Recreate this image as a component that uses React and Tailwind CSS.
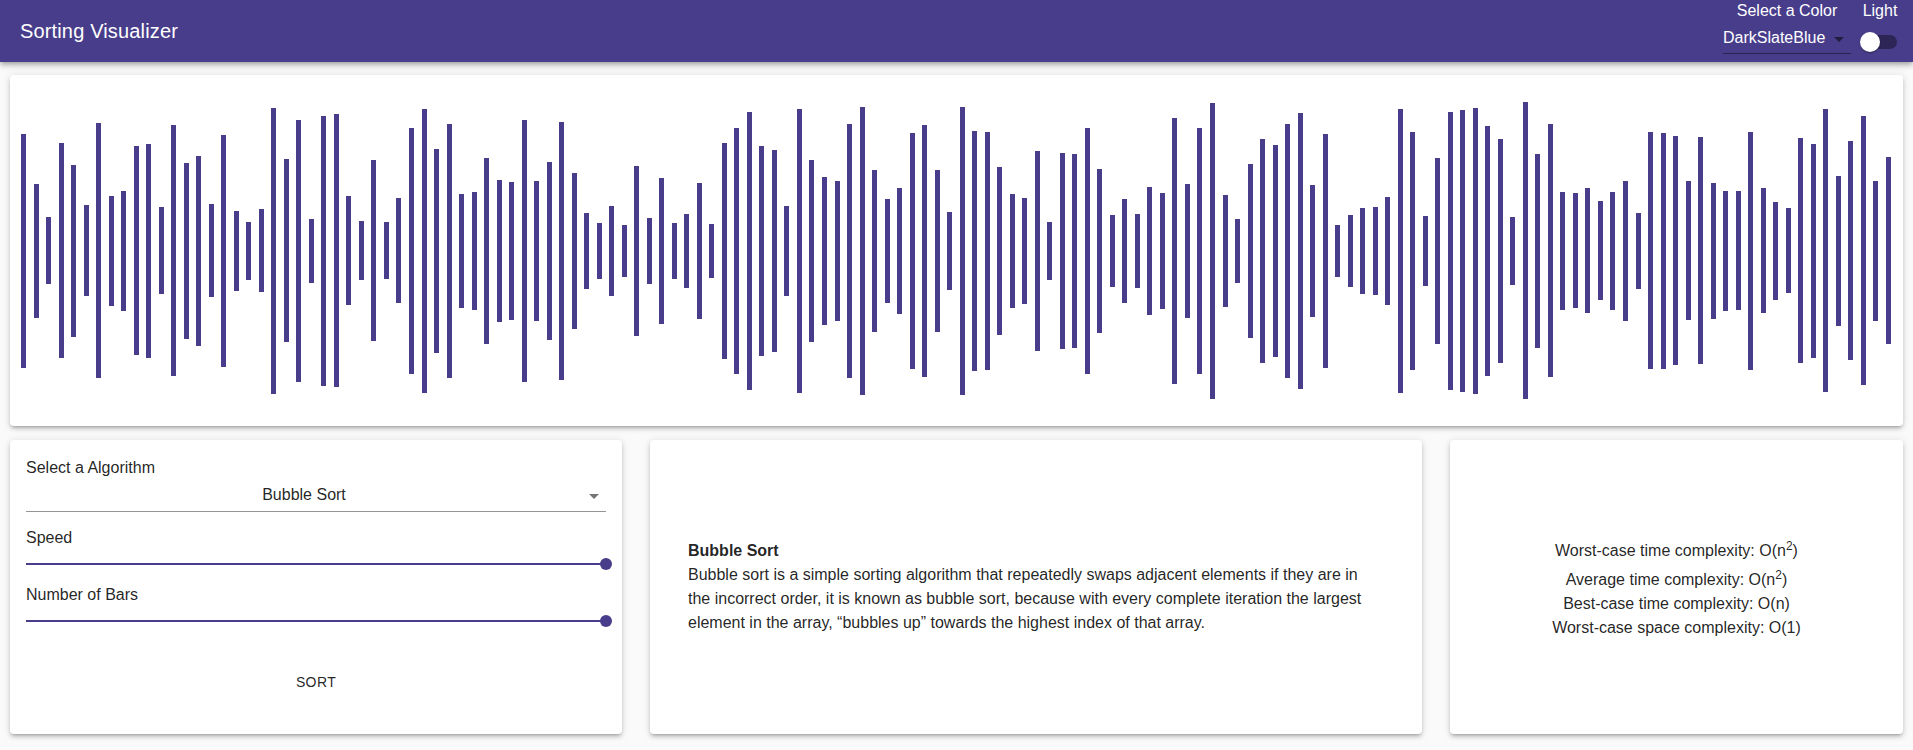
const H = [
  234,134,67,215,172,91,255,110,120,209,214,87,251,176,190,93,232,80,58,83,286,183,262,64,270,273,109,59,181,57,105,
  246,284,204,254,114,118,186,142,138,262,140,178,258,156,76,56,90,52,170,66,146,56,74,136,54,216,246,278,210,
  202,90,284,182,148,140,254,288,162,104,126,236,252,162,78,288,240,238,168,114,106,200,58,196,194,246,164,72,104,
  74,
  128,116,266,134,246,296,112,64,174,224,212,254,276,132,234,52,72,86,88,108,284,238,70,186,278,282,286,250,224,
  68,297,194,253,118,115,125,99,118,140,76,237,236,229,139,227,136,120,119,238,125,98,85,225,214,283,150,219,269,140,187,
];

const cardShadow =
  "shadow-[0_3px_3px_-2px_rgba(0,0,0,0.2),0_3px_4px_0_rgba(0,0,0,0.14),0_1px_8px_0_rgba(0,0,0,0.12)]";

function Arrow({ className }) {
  return (
    <svg className={className} viewBox="0 0 24 24" width="24" height="24">
      <path d="M7 10l5 5 5-5z" fill="rgba(0,0,0,0.54)" />
    </svg>
  );
}

function Slider() {
  return (
    <div className="relative h-[28px]">
      <div className="absolute left-0 right-0 top-[13px] h-[2px] bg-[#483D8B]" />
      <div className="absolute right-[-6px] top-[8px] w-3 h-3 rounded-full bg-[#483D8B]" />
    </div>
  );
}

export default function App() {
  return (
    <div className="min-h-[750px] bg-[#fafafa] font-['Liberation_Sans',Arial,sans-serif] text-[rgba(0,0,0,0.87)]">
      <header className="relative z-10 h-[62px] bg-[#483D8B] text-white flex justify-between pl-[20px] pr-[13px] shadow-[0_2px_4px_-1px_rgba(0,0,0,0.2),0_4px_5px_0_rgba(0,0,0,0.14),0_1px_10px_0_rgba(0,0,0,0.12)]">
        <div className="self-center text-[20px] leading-[32px] tracking-[0.15px]">Sorting Visualizer</div>
        <div className="flex gap-[9px]">
          <div className="w-[128px] pt-[1px]">
            <div className="text-[16px] leading-[20px] text-center">Select a Color</div>
            <div className="relative mt-[7px] pb-[5px] pr-[24px] border-b border-[rgba(0,0,0,0.42)] text-[16px] leading-[20px]">
              DarkSlateBlue
              <Arrow className="absolute right-0 top-[-1px] w-6 h-6" />
            </div>
          </div>
          <div className="w-[40px] pt-[1px]">
            <div className="text-[16px] leading-[20px] text-center">Light</div>
            <div className="relative mt-[11px] h-5 w-[40px]">
              <div className="absolute left-[3px] top-[3px] w-[34px] h-[14px] rounded-full bg-[rgba(0,0,0,0.38)]" />
              <div className="absolute left-0 top-0 w-5 h-5 rounded-full bg-white shadow-[0_2px_1px_-1px_rgba(0,0,0,0.2),0_1px_1px_0_rgba(0,0,0,0.14),0_1px_3px_0_rgba(0,0,0,0.12)]" />
            </div>
          </div>
        </div>
      </header>

      <main className="px-[10px] pt-[13px]">
        <div className={`h-[351px] bg-white rounded-[4px] ${cardShadow} flex items-center justify-between px-[11px]`}>
          {H.map((h, i) => (
            <div key={i} className="w-[5px] bg-[#483D8B]" style={{ height: h }} />
          ))}
        </div>

        <div className="mt-[14px] h-[294px] grid grid-cols-[612px_772px_1fr] gap-[28px]">
          <div className={`bg-white rounded-[4px] ${cardShadow} p-4 text-[16px]`}>
            <div className="leading-6">Select a Algorithm</div>
            <div className="relative pt-[5px] pb-[7px] pr-6 leading-[19px] text-center border-b border-[rgba(0,0,0,0.42)]">
              Bubble Sort
              <Arrow className="absolute right-0 top-[4px] w-6 h-6" />
            </div>
            <div className="mt-[14px] leading-6">Speed</div>
            <Slider />
            <div className="mt-[5px] leading-6">Number of Bars</div>
            <Slider />
            <div className="mt-[29px] flex justify-center">
              <button className="px-2 py-[6px] text-[14px] leading-[24.5px] tracking-[0.4px] uppercase">Sort</button>
            </div>
          </div>

          <div className={`bg-white rounded-[4px] ${cardShadow} flex flex-col justify-center px-[38px] text-[16px] leading-6`}>
            <div className="font-bold">Bubble Sort</div>
            <div>
              Bubble sort is a simple sorting algorithm that repeatedly swaps adjacent elements if they are in the incorrect order, it is known as bubble sort, because with every complete iteration the largest element in the array, “bubbles up” towards the highest index of that array.
            </div>
          </div>

          <div className={`bg-white rounded-[4px] ${cardShadow} flex flex-col items-center justify-center text-center text-[16px] leading-6`}>
            <div>
              Worst-case time complexity: O(n<sup className="static align-super text-[12px] leading-[24px]">2</sup>)
            </div>
            <div>
              Average time complexity: O(n<sup className="static align-super text-[12px] leading-[24px]">2</sup>)
            </div>
            <div>Best-case time complexity: O(n)</div>
            <div>Worst-case space complexity: O(1)</div>
          </div>
        </div>
      </main>
    </div>
  );
}
